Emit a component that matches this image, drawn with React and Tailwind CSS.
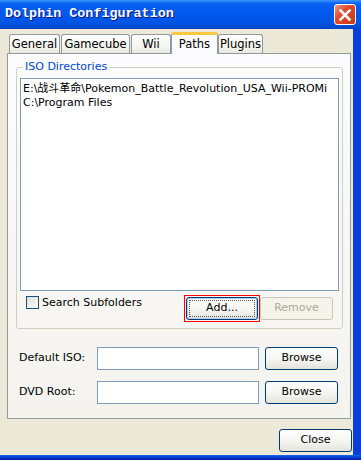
const ui = { fontFamily: '"DejaVu Sans", "Noto Sans CJK SC", sans-serif' }

function XpButton({ children, className = "", disabled, focused }) {
  if (disabled) {
    return (
      <div className={`h-[23px] rounded-[3px] border border-[#c9c7ba] bg-[#f5f4ea] text-[#aca899] flex items-center justify-center ${className}`}>
        {children}
      </div>
    )
  }
  return (
    <div className={`h-[23px] rounded-[3px] border border-[#003c74] bg-[linear-gradient(#ffffff,#f3f3ef_60%,#e3e2da)] text-black flex items-center justify-center p-[2px] ${focused ? "shadow-[inset_0_0_0_1px_#b6cdf5]" : ""} ${className}`}>
      <div className={`w-full h-full flex items-center justify-center ${focused ? "outline outline-1 outline-dotted outline-[#555] -outline-offset-1" : ""}`}>
        {children}
      </div>
    </div>
  )
}

function Tab({ label, w, active }) {
  if (active) {
    return (
      <div className={`${w} h-[22px] -mb-px -mx-[1px] z-10 relative rounded-t-[3px] border border-b-0 border-[#919b9c] border-t-[3px] border-t-[#ffc83c] bg-[#fcfcfe] flex items-center justify-center text-[11.5px] text-black pt-[1px]`}>
        {label}
      </div>
    )
  }
  return (
    <div className={`${w} h-[19px] rounded-t-[3px] border border-b-0 border-[#919b9c] bg-[linear-gradient(#ffffff,#f3f3ef_70%,#e8e7df)] flex items-center justify-center text-[11.5px] text-black pt-[2px]`}>
      {label}
    </div>
  )
}

export default function App() {
  return (
    <div className="w-[361px] h-[460px] bg-[#ece9d8] flex flex-col overflow-hidden" style={ui}>
      {/* title bar */}
      <div className="h-[29px] shrink-0 flex items-center justify-between pl-[5px] pr-[5px] bg-[linear-gradient(#3d95ff_0%,#0a62f0_12%,#0058ee_45%,#0054e3_80%,#0045c8_100%)]">
        <span
          className="text-white font-bold text-[13.4px] [text-shadow:1px_1px_0_#0a1883]"
          style={{ fontFamily: '"Liberation Mono", monospace' }}
        >
          Dolphin Configuration
        </span>
        <div className="w-[22px] h-[21px] rounded-[3px] border border-white bg-[linear-gradient(135deg,#f29a80,#e2492a_40%,#c8381a)] flex items-center justify-center">
          <svg width="14" height="14" viewBox="0 0 14 14">
            <path d="M2.5 2.5 L11.5 11.5 M11.5 2.5 L2.5 11.5" stroke="white" strokeWidth="2.6" strokeLinecap="square" />
          </svg>
        </div>
      </div>

      {/* body */}
      <div className="flex-1 flex flex-col border-r-[8px] border-r-[#0a3ed6]">
        {/* tabs */}
        <div className="flex items-end gap-[1px] pl-[9px] pt-[2px] h-[24px] shrink-0">
          <Tab label="General" w="w-[51px]" />
          <Tab label="Gamecube" w="w-[69px]" />
          <Tab label="Wii" w="w-[40px]" />
          <Tab label="Paths" w="w-[47px]" active />
          <Tab label="Plugins" w="w-[45px]" />
        </div>

        {/* panel */}
        <div className="ml-[7px] mr-[2px] h-[366px] border border-[#919b9c] bg-[linear-gradient(#fcfcfe,#f4f3ee)] pl-[8px] pr-[7px] pt-[13px] flex flex-col">
          {/* group box */}
          <div className="relative rounded-[3px] border border-[#d0d0bf] h-[262px] flex flex-col px-[3px] pt-[10px]">
            <span className="absolute -top-[8px] left-[6px] px-[2px] bg-[#fbfbfc] text-[11px] text-[#0046d5] leading-[14px]">
              ISO Directories
            </span>
            <div className="h-[213px] border border-[#7f9db9] bg-white px-[2px] pt-[3px] text-[11px] leading-[14px] text-black overflow-hidden whitespace-nowrap">
              <div>E:\战斗革命\Pokemon_Battle_Revolution_USA_Wii-PROMi</div>
              <div>C:\Program Files</div>
            </div>
            <div className="flex items-start mt-[4px] pl-[6px] pr-[6px]">
              <div className="flex items-center mt-[1px]">
                <div className="w-[13px] h-[13px] border border-[#1c5180] bg-[linear-gradient(135deg,#dcdcd7,#ffffff)]" />
                <span className="ml-[3px] text-[11px] text-black leading-[13px]">Search Subfolders</span>
              </div>
              <div className="ml-auto flex items-center">
                <div className="border border-[#ff0000] p-[1px]">
                  <XpButton className="w-[72px] text-[11px]" focused>Add...</XpButton>
                </div>
                <XpButton className="w-[73px] text-[11px]" disabled>Remove</XpButton>
              </div>
            </div>
          </div>

          {/* path rows */}
          <div className="flex items-center mt-[18px] pl-[3px]">
            <span className="w-[78px] text-[11px] text-black">Default ISO:</span>
            <div className="w-[162px] h-[23px] border border-[#7f9db9] bg-white" />
            <XpButton className="w-[73px] ml-[6px] text-[11px]">Browse</XpButton>
          </div>
          <div className="flex items-center mt-[11px] pl-[3px]">
            <span className="w-[78px] text-[11px] text-black">DVD Root:</span>
            <div className="w-[162px] h-[23px] border border-[#7f9db9] bg-white" />
            <XpButton className="w-[73px] ml-[6px] text-[11px]">Browse</XpButton>
          </div>
        </div>

        {/* footer */}
        <div className="flex justify-end pr-[1px] mt-[10px]">
          <XpButton className="w-[73px] text-[11px]">Close</XpButton>
        </div>
      </div>

      {/* bottom frame */}
      <div className="h-[5px] shrink-0 bg-[linear-gradient(#166aee,#0a3ed6_40%,#001ea0)]" />
    </div>
  )
}
